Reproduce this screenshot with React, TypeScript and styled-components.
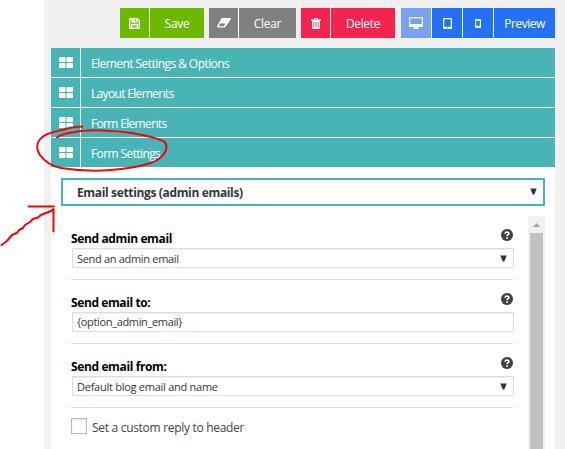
import React from 'react';
import styled, { createGlobalStyle } from 'styled-components';

const Global = createGlobalStyle`
  * { box-sizing: border-box; }
  body { margin: 0; background: #fff; font-family: "Open Sans", "Noto Sans", sans-serif; overflow: hidden; }
`;

const Page = styled.div`
  position: relative;
  width: 565px;
  height: 449px;
  padding-left: 44px;
  overflow: hidden;
`;
const Builder = styled.main`
  height: 449px;
  padding: 8px 10px 0 7px;
  background: #f0f0f0;
  display: flex;
  flex-direction: column;
`;
const Toolbar = styled.div`
  display: flex;
  justify-content: flex-end;
  height: 30px;
  margin-bottom: 10px;
`;
const ButtonGroup = styled.div<{ $gap: number }>`
  display: flex;
  gap: 1px;
  margin-left: ${p => p.$gap}px;
  background: #fff;
`;
const Button = styled.button<{ $w: number; $bg: string; $ls?: number }>`
  display: flex;
  align-items: center;
  justify-content: center;
  width: ${p => p.$w}px;
  height: 30px;
  padding: 0;
  border: 0;
  background: ${p => p.$bg};
  color: #fff;
  font: 12px/30px "Open Sans", sans-serif;
  letter-spacing: ${p => p.$ls ?? 0}px;
`;
const ButtonText = styled.span`
  padding-top: 2px;
`;

const Accordion = styled.nav`
  display: flex;
  flex-direction: column;
  gap: 1px;
  background: #fff;
`;
const Section = styled.div`
  display: flex;
  gap: 1px;
  height: 29px;
`;
const SectionIcon = styled.span`
  display: flex;
  align-items: center;
  width: 29px;
  padding-left: 8px;
  background: #49b4b6;
`;
const SectionTitle = styled.span<{ $ls: number }>`
  flex: 1;
  padding-left: 10px;
  background: #49b4b6;
  color: #fff;
  font-size: 12px;
  line-height: 31px;
  letter-spacing: ${p => p.$ls}px;
`;

const Panel = styled.section`
  flex: 1;
  padding: 11px 10px 0;
  background: #fff;
`;
const TabSelect = styled.div`
  display: flex;
  justify-content: space-between;
  height: 28px;
  padding: 0 6px 0 14px;
  border: 2px solid #49b4b6;
  box-shadow: inset 0 1px 2px rgba(0, 0, 0, 0.07);
  color: #32373c;
  font-size: 12px;
  font-weight: 700;
  line-height: 25px;
  letter-spacing: -0.35px;
`;
const Arrow = styled.svg`
  width: 7px;
  height: 7px;
  fill: #32373c;
  flex: none;
`;
const TabArrow = styled(Arrow)`
  margin-top: 8px;
`;
const Scroller = styled.div`
  display: flex;
  justify-content: space-between;
  height: 233px;
  margin-top: 10px;
  padding-left: 10px;
`;
const Fields = styled.div`
  width: 443px;
`;
const Field = styled.div`
  height: 64px;
  padding-top: 12px;
`;
const FieldHead = styled.div`
  display: flex;
  justify-content: space-between;
  height: 20px;
  width: 442px;
`;
const Label = styled.label<{ $ls: number }>`
  color: #000;
  font-size: 12px;
  font-weight: 700;
  line-height: 21px;
  letter-spacing: ${p => p.$ls}px;
`;
const Help = styled.svg`
  width: 12px;
  height: 12px;
  margin-top: 1px;
`;
const Control = styled.div<{ $ls: number; $lh: number }>`
  display: flex;
  justify-content: space-between;
  width: 442px;
  height: 20px;
  margin-left: 1px;
  padding: 0 6px 0 4px;
  border: 1px solid #ddd;
  box-shadow: inset 0 1px 2px rgba(0, 0, 0, 0.07);
  color: #32373c;
  font-size: 11px;
  line-height: ${p => p.$lh}px;
  letter-spacing: ${p => p.$ls}px;
  white-space: pre;
`;
const ControlArrow = styled(Arrow)`
  margin-top: 6px;
`;
const Divider = styled.div`
  width: 442px;
  height: 1px;
  margin-top: 11px;
  background: #ddd;
`;
const CheckRow = styled.label`
  display: flex;
  gap: 5px;
  margin-top: 10px;
  color: #444;
  font-size: 12px;
  line-height: 20px;
  letter-spacing: -0.3px;
`;
const CheckBox = styled.span`
  width: 16px;
  height: 16px;
  border: 1px solid #b4b9be;
  box-shadow: inset 0 1px 2px rgba(0, 0, 0, 0.1);
`;
const Scrollbar = styled.div`
  display: flex;
  flex-direction: column;
  align-items: center;
  width: 17px;
  background: #f1f1f1;
`;
const ScrollUp = styled.svg`
  width: 7px;
  height: 4px;
  margin: 7px 0 6px;
  fill: #a3a3a3;
  flex: none;
`;
const Thumb = styled.div`
  flex: 1;
  width: 13px;
  background: #c1c1c1;
`;
const Annotation = styled.svg`
  position: absolute;
  inset: 0;
  fill: none;
  stroke: #fa0000;
  stroke-width: 2;
  stroke-linecap: round;
  stroke-linejoin: round;
  pointer-events: none;
`;

const SaveIcon = () => (
  <svg width="11" height="11" viewBox="0 0 11 11">
    <path d="M1 0H8.500L11 2.500V10Q11 11 10 11H1Q0 11 0 10V1Q0 0 1 0Z" fill="#fff" />
    <path d="M1.200 1.200H2.400V4.600H8.400V1.600L9.800 3V9.800H9V6H2V9.800H1.200ZM5.600 1.200H7V3.400H5.600ZM3.200 7.200H7.800V9.800H3.200Z" fill="#6cba00" fillOpacity=".8" />
  </svg>
);
const EraserIcon = () => (
  <svg width="14" height="10" viewBox="0 0 14 10">
    <path d="M5.5 0H13Q14.2 .2 13.6 1.7L8.8 8.3Q8 9.5 6.8 9.5H1Q-.3 9.2 .2 8L4 1Q4.6 0 5.5 0Z" fill="#fff" />
    <path d="M1.7 8.2L3.2 5.6H8.6L6.8 8.2Z" fill="#808080" />
  </svg>
);
const TrashIcon = () => (
  <svg width="10" height="11" viewBox="0 0 10 11">
    <path d="M0 1.500H3V.8Q3 0 3.800 0H6.200Q7 0 7 .8V1.500H10V2.800H9V10Q9 11 8 11H2Q1 11 1 10V2.800H0Z" fill="#fff" />
    <path d="M4 1H6V1.600H4ZM2.500 4H3.300V9.200H2.500ZM4.600 4H5.400V9.200H4.600ZM6.700 4H7.500V9.200H6.700Z" fill="#f7234f" />
  </svg>
);
const DesktopIcon = () => (
  <svg width="14" height="12" viewBox="0 0 14 12">
    <path fill="#fff" fillRule="evenodd" d="M1 0H13Q14 0 14 1V9Q14 10 13 10H9V11H10V12H4V11H5V10H1Q0 10 0 9V1Q0 0 1 0ZM1.2 1.2V7H12.8V1.2Z" />
  </svg>
);
const TabletIcon = () => (
  <svg width="9" height="11" viewBox="0 0 9 11">
    <path fill="#fff" fillRule="evenodd" d="M1 0H8Q9 0 9 1V10Q9 11 8 11H1Q0 11 0 10V1Q0 0 1 0ZM1.3 1.3V8.7H7.7V1.3ZM4 9.5V10.3H5V9.5Z" />
  </svg>
);
const PhoneIcon = () => (
  <svg width="6" height="9" viewBox="0 0 6 9">
    <path fill="#fff" fillRule="evenodd" d="M1 0H5Q6 0 6 1V8Q6 9 5 9H1Q0 9 0 8V1Q0 0 1 0ZM1.2 1.8V6.8H4.8V1.8ZM2.6 7.5V8.3H3.4V7.5Z" />
  </svg>
);
const GridIcon = () => (
  <svg width="14" height="11" viewBox="0 0 14 11" fill="#fff">
    <rect width="6.5" height="5" rx=".7" />
    <rect x="7.5" width="6.5" height="5" rx=".7" />
    <rect y="6" width="6.5" height="5" rx=".7" />
    <rect x="7.5" y="6" width="6.5" height="5" rx=".7" />
  </svg>
);
const HelpIcon = () => (
  <Help viewBox="0 0 12 12">
    <circle cx="6" cy="6" r="6" fill="#3f3f42" />
    <path d="M4.1 4.7Q4.2 3 6.1 3Q7.9 3.1 7.9 4.5Q7.9 5.3 6.9 5.8Q6.1 6.2 6.1 7.1" fill="none" stroke="#fff" strokeWidth="1.6" />
    <rect x="5.2" y="8.1" width="1.8" height="1.6" fill="#fff" />
  </Help>
);
const arrowPath = <path d="M.3 .5H6.7L4.3 6.5H2.7Z" />;

const sections = [
  { title: 'Element Settings & Options', ls: -0.56 },
  { title: 'Layout Elements', ls: -0.67 },
  { title: 'Form Elements', ls: -0.67 },
  { title: 'Form Settings', ls: -0.6 },
];
const fields = [
  { label: 'Send admin email', lls: -0.38, value: 'Send an admin email', ls: -0.31, lh: 19, select: true },
  { label: 'Send email to:', lls: -0.4, value: '{option_admin_email}', ls: -0.34, lh: 18, select: false },
  { label: 'Send email from:', lls: -0.38, value: 'Default blog email and name', ls: -0.26, lh: 19, select: true },
];

export default function App() {
  return (
    <Page>
      <Global />
      <Builder>
        <Toolbar>
          <ButtonGroup $gap={0}>
            <Button $w={29} $bg="#6cba00"><SaveIcon /></Button>
            <Button $w={54} $bg="#6cba00" $ls={-0.3}><ButtonText>Save</ButtonText></Button>
          </ButtonGroup>
          <ButtonGroup $gap={5}>
            <Button $w={29} $bg="#808080"><EraserIcon /></Button>
            <Button $w={57} $bg="#808080" $ls={-0.3}><ButtonText>Clear</ButtonText></Button>
          </ButtonGroup>
          <ButtonGroup $gap={5}>
            <Button $w={29} $bg="#f7234f"><TrashIcon /></Button>
            <Button $w={64} $bg="#f7234f" $ls={-0.35}><ButtonText>Delete</ButtonText></Button>
          </ButtonGroup>
          <ButtonGroup $gap={6}>
            <Button $w={30} $bg="#78a2ef"><DesktopIcon /></Button>
            <Button $w={30} $bg="#2372f6"><TabletIcon /></Button>
            <Button $w={30} $bg="#2372f6"><PhoneIcon /></Button>
            <Button $w={61} $bg="#2372f6" $ls={-0.5}><ButtonText>Preview</ButtonText></Button>
          </ButtonGroup>
        </Toolbar>
        <Accordion>
          {sections.map(s => (
            <Section key={s.title}>
              <SectionIcon><GridIcon /></SectionIcon>
              <SectionTitle $ls={s.ls}>{s.title}</SectionTitle>
            </Section>
          ))}
        </Accordion>
        <Panel>
          <TabSelect>
            <span>Email settings (admin emails)</span>
            <TabArrow viewBox="0 0 7 7">{arrowPath}</TabArrow>
          </TabSelect>
          <Scroller>
            <Fields>
              {fields.map(f => (
                <Field key={f.label}>
                  <FieldHead>
                    <Label $ls={f.lls}>{f.label}</Label>
                    <HelpIcon />
                  </FieldHead>
                  <Control $ls={f.ls} $lh={f.lh}>
                    <span>{f.value}</span>
                    {f.select && <ControlArrow viewBox="0 0 7 7">{arrowPath}</ControlArrow>}
                  </Control>
                  <Divider />
                </Field>
              ))}
              <CheckRow>
                <CheckBox />
                <span>Set a custom reply to header</span>
              </CheckRow>
            </Fields>
            <Scrollbar>
              <ScrollUp viewBox="0 0 7 4"><path d="M0 4L3.5 0L7 4Z" /></ScrollUp>
              <Thumb />
            </Scrollbar>
          </Scroller>
        </Panel>
      </Builder>
      <Annotation width="565" height="449">
        <path d="M82.5 126.5C76 127 71 127 66 129C59 131 49 132 43 136.500C36 142 36 149 40 155C45 162 51 166 61 168C80 171 102 171.500 121 169C138 167 153 164 160 158C166 154 168 146 165 142.500C161 138 146 136 132 133C115 130.500 88 129 75 132C68 133 61 134 57 137.500" />
        <path d="M1.500 245L7 241L12 235L17 233L19 230L23 228L25 225L30 222L33 219L38 217.500L41 215L46 213L51 211L53.500 209" />
        <path d="M28.500 206.500H54M53.500 209.500V231.500" />
      </Annotation>
    </Page>
  );
}
